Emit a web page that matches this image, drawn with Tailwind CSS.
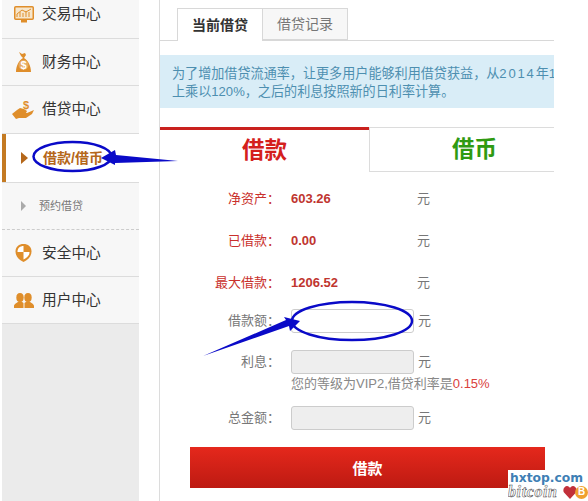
<!DOCTYPE html>
<html><head><meta charset="utf-8"><script src="https://cdn.jsdelivr.net/npm/@tailwindcss/browser@4"></script></head>
<body class="bg-white">
<div class="relative flex w-[588px] h-[501px] overflow-hidden bg-white text-[#666] font-['Liberation_Sans','Noto_Sans_CJK_SC',sans-serif]">
  <!-- sidebar -->
  <aside class="w-[137px] ml-[2px] shrink-0 h-full bg-[#ebebeb] flex flex-col">
    <div class="h-[39px] pb-[9px] bg-[#f7f7f7] border-b border-[#dcdcdc] flex items-center pl-[12px] text-[14.7px] text-[#333]">
      <span class="w-[28px] shrink-0"><svg class="block" width="20" height="17" viewBox="0 0 20 17"><rect x="0.75" y="0.75" width="18.5" height="12.5" rx="1" fill="#f6e6cc" stroke="#df8e2b" stroke-width="1.5"/><path d="M3 11V8M6 11V6M9 11V7M12 11V5M15 11V6M3 8L8 4L12 6L17 3" stroke="#df8e2b" fill="none"/><rect x="7" y="14" width="6" height="2.5" fill="#df8e2b"/></svg></span>
      <span>交易中心</span>
    </div>
    <div class="h-[47px] bg-[#f7f7f7] border-b border-[#dcdcdc] flex items-center pl-[12px] text-[14.7px] text-[#333]">
      <span class="w-[28px] shrink-0 pl-[1px]"><svg class="block" width="17" height="21" viewBox="0 0 17 21"><path d="M4 0l3 2 3-1 1 2-2 3c4 2 7 8 7 14H1c0-6 3-12 7-14L6 4z" fill="#df8e2b"/><circle cx="8.500" cy="13" r="5" fill="#fff" opacity=".25"/><text x="8.500" y="17" text-anchor="middle" font-size="11" font-weight="700" fill="#fff" font-family="Liberation Sans">$</text></svg></span>
      <span>财务中心</span>
    </div>
    <div class="h-[48px] bg-[#f7f7f7] border-b border-[#dcdcdc] flex items-center pl-[10px] text-[14.7px] text-[#333]">
      <span class="w-[30px] shrink-0"><svg class="block" width="23" height="20" viewBox="0 0 23 20"><path d="M0 14l5-4 3-2 4 1 3 2-1 2-4 0 5 0 7-3-2 4-6 4H7l-3 1z" fill="#df8e2b"/><text x="14" y="9" text-anchor="middle" font-size="11" font-weight="700" fill="#df8e2b" font-family="Liberation Sans">$</text></svg></span>
      <span>借贷中心</span>
    </div>
    <div class="h-[48px] bg-white border-l-[4px] border-[#c47a22] flex items-center pl-[15px] text-[14px] font-bold text-[#b5671a]">
      <span class="w-0 h-0 border-y-[6px] border-y-transparent border-l-[7px] border-l-[#b5671a] mr-[15px]"></span>
      <span class="whitespace-nowrap">借款/借币</span>
    </div>
    <div class="h-[48px] bg-[#f7f7f7] border-t border-b border-t-[#dcdcdc] border-b-[#ccc] [border-bottom-style:dashed] flex items-center pl-[19px] text-[11px] text-[#777]">
      <span class="w-0 h-0 border-y-[5px] border-y-transparent border-l-[5px] border-l-[#aaa] mr-[13px]"></span>
      <span>预约借贷</span>
    </div>
    <div class="h-[47px] bg-[#f7f7f7] border-b border-[#dcdcdc] flex items-center pl-[13px] text-[14.7px] text-[#333]">
      <span class="w-[27px] shrink-0"><svg class="block" width="17" height="18" viewBox="0 0 17 18"><path d="M8.500 0c4.500 0 8 2.500 8 7.500 0 5-3.500 8.500-8 10.500C4 16 .5 12.500.5 7.500.5 2.500 4 0 8.500 0z" fill="#df8e2b"/><path d="M8.500 2C5 2 2.500 4 2.500 8h6zM8.500 8v7.500c3-1.500 6-3.500 6-7.500z" fill="#fff"/></svg></span>
      <span>安全中心</span>
    </div>
    <div class="h-[47px] bg-[#f7f7f7] border-b border-[#dcdcdc] flex items-center pl-[12px] text-[14.7px] text-[#333]">
      <span class="w-[28px] shrink-0"><svg class="block" width="20" height="15" viewBox="0 0 20 15"><ellipse cx="6" cy="4.500" rx="3.700" ry="4.500" fill="#df8e2b"/><ellipse cx="14" cy="4.500" rx="3.700" ry="4.500" fill="#df8e2b"/><path d="M0 15v-2c0-2 3-3 4.500-4.500h3L9.500 10v5z" fill="#df8e2b"/><path d="M20 15v-2c0-2-3-3-4.500-4.500h-3L10.500 10v5z" fill="#df8e2b"/></svg></span>
      <span>用户中心</span>
    </div>
  </aside>
  <!-- main -->
  <main class="ml-[20px] w-[395px] h-full border-l border-[#dcdcdc] pt-[8px] shrink-0 overflow-hidden">
    <div class="h-[33px] border-b border-[#d8d8d8] flex pl-[17px] text-[14px]">
      <div class="w-[86px] h-[33px] bg-white border border-b-0 border-[#d8d8d8] flex items-center justify-center font-bold text-[#333]">当前借贷</div>
      <div class="w-[85px] h-[32px] bg-[#f7f7f7] border border-l-0 border-[#d8d8d8] flex items-center justify-center text-[#777]">借贷记录</div>
    </div>
    <div class="mt-[14px] h-[53px] w-[394px] bg-[#d9edf7] text-[#4d8fb0] text-[13.1px] leading-[17.5px] pl-[12px] pt-[10px] overflow-hidden whitespace-nowrap">为了增加借贷流通率，让更多用户能够利用借贷获益，从<span class="tracking-[1.8px]">2014</span>年1月<br>上乘以120%，之后的利息按照新的日利率计算。</div>
    <div class="mt-[19px] flex h-[45px] w-[394px] overflow-hidden">
      <div class="w-[209px] shrink-0 pb-[1px] border-t-[3px] border-[#c9211e] flex items-center justify-center text-[22.5px] font-bold text-[#d4201c]">借款</div>
      <div class="w-[210px] shrink-0 border-t border-b border-l border-[#dcdcdc] flex items-center justify-center text-[22.5px] font-bold text-[#2f9a12]">借币</div>
    </div>
    <div class="relative pl-[30px] text-[13px] text-[#777]">
      <div class="h-[42px] mt-[6px] flex items-center">
        <span class="w-[90px] text-right text-[#c9302c] whitespace-nowrap">净资产：</span><span class="ml-[11px] w-[126px] font-bold text-[13px] text-[#c0352f]">603.26</span><span>元</span>
      </div>
      <div class="h-[42px] flex items-center">
        <span class="w-[90px] text-right text-[#c9302c] whitespace-nowrap">已借款：</span><span class="ml-[11px] w-[126px] font-bold text-[13px] text-[#c0352f]">0.00</span><span>元</span>
      </div>
      <div class="h-[42px] flex items-center">
        <span class="w-[90px] text-right text-[#c9302c] whitespace-nowrap">最大借款：</span><span class="ml-[11px] w-[126px] font-bold text-[13px] text-[#c0352f]">1206.52</span><span>元</span>
      </div>
      <div class="h-[34px] flex items-center">
        <span class="w-[90px] text-right">借款额：</span><span class="ml-[11px] w-[123px] h-[24px] bg-white border border-[#ccc] rounded-[3px]"></span><span class="ml-[4px]">元</span>
      </div>
      <div class="mt-[12px] h-[24px] flex items-center">
        <span class="w-[90px] text-right">利息：</span><span class="ml-[11px] w-[123px] h-[24px] bg-[#eee] border border-[#ccc] rounded-[3px]"></span><span class="ml-[4px]">元</span>
      </div>
      <div class="pl-[101px] h-[32px] leading-[20px] text-[#888] whitespace-nowrap">您的等级为VIP2,借贷利率是<span class="text-[#d9403c]">0.15%</span></div>
      <div class="h-[24px] flex items-center">
        <span class="w-[90px] text-right">总金额：</span><span class="ml-[11px] w-[123px] h-[24px] bg-[#eee] border border-[#ccc] rounded-[3px]"></span><span class="ml-[4px]">元</span>
      </div>
      <div class="mt-[17px] w-[355px] h-[41px] pt-[3px] bg-gradient-to-b from-[#e5281c] to-[#bd1a12] flex items-center justify-center text-white font-bold text-[15px]">借款</div>
    </div>
  </main>
  <!-- hand-drawn annotations over the page -->
  <svg class="absolute inset-0 pointer-events-none" width="588" height="501" viewBox="0 0 588 501">
    <ellipse cx="72.500" cy="156.500" rx="39" ry="14.500" fill="none" stroke="#0a0ac8" stroke-width="2.500"/>
    <path d="M178 161L116 155L115 150L101 158L115 165L115 163Z" fill="#0a0ac8"/>
    <ellipse cx="352" cy="321" rx="60" ry="19" fill="none" stroke="#0a0ac8" stroke-width="2.500"/>
    <path d="M203 356L286 320L284 317L300 321L290 331L289 326Z" fill="#0a0ac8"/>
  </svg>
  <!-- watermark -->
  <div class="absolute right-0 bottom-0 w-[80px] h-[31px] bg-white leading-none overflow-hidden">
    <div class="text-[12.3px] font-bold text-[#3f7fb5] pl-[2px] pt-[2px] font-['DejaVu_Sans',sans-serif]">hxtop.com</div>
    <div class="flex items-center">
      <span class="w-[55px] shrink-0 text-[16px] tracking-[0.6px] font-bold italic text-white [-webkit-text-stroke:0.5px_#444] font-['Liberation_Serif',serif]">bitcoin</span>
      <svg class="block shrink-0" width="14" height="13" viewBox="0 0 14 13"><path d="M7 13L1 6.500C-1 3 2 0 4 0c1.500 0 2.500 1 3 2 .5-1 1.500-2 3-2 2 0 5 3 3 6.500z" fill="#c2303a"/></svg>
      <span class="w-[13px] h-[13px] shrink-0 -ml-[2px] rounded-full bg-[#f0a030] text-white text-[10px] font-bold flex items-center justify-center">B</span>
    </div>
  </div>
</div>
</body></html>
